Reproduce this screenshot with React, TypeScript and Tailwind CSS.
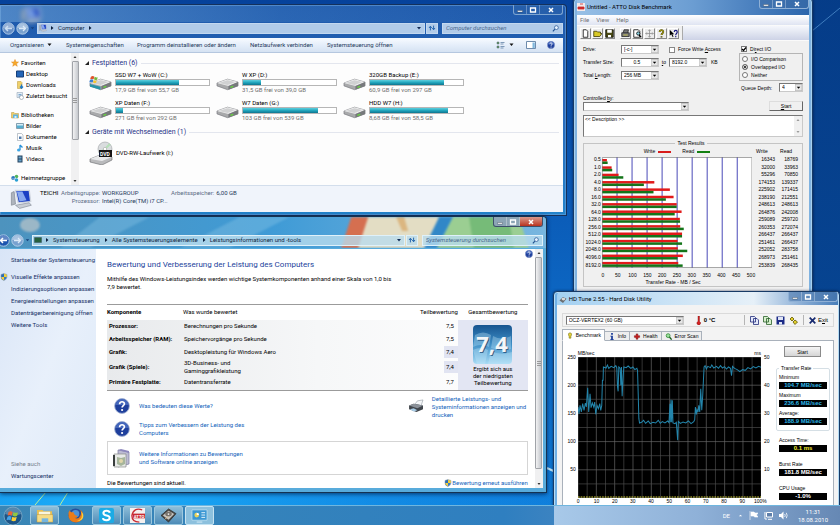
import type { ReactNode } from "react";

const NAV_GROUPS = [
  { title: "Favoriten", icon: "star", items: [["Desktop", "desktop"], ["Downloads", "downloads"], ["Zuletzt besucht", "recent"]] },
  { title: "Bibliotheken", icon: "library", items: [["Bilder", "pictures"], ["Dokumente", "document"], ["Musik", "music"], ["Videos", "video"]] },
  { title: "Heimnetzgruppe", icon: "homegroup", items: [] },
];

const DRIVES = [
  { name: "SSD W7 + WoW (C:)", free: "17,9 GB frei von 55,7 GB", used: 68, system: true },
  { name: "W XP (D:)", free: "31,5 GB frei von 39,0 GB", used: 19 },
  { name: "320GB Backup (E:)", free: "60,9 GB frei von 297 GB", used: 80 },
  { name: "XP Daten (F:)", free: "271 GB frei von 292 GB", used: 7 },
  { name: "W7 Daten (G:)", free: "103 GB frei von 539 GB", used: 81 },
  { name: "HDD W7 (H:)", free: "8,68 GB frei von 58,5 GB", used: 84 },
];

const SCORES = [
  { part: "Prozessor:", what: "Berechnungen pro Sekunde", score: "7,5" },
  { part: "Arbeitsspeicher (RAM):", what: "Speichervorgänge pro Sekunde", score: "7,5" },
  { part: "Grafik:", what: "Desktopleistung für Windows Aero", score: "7,4", low: true },
  { part: "Grafik (Spiele):", what: "3D-Business- und Gaminggrafikleistung", score: "7,4", low: true },
  { part: "Primäre Festplatte:", what: "Datentransferrate", score: "7,7" },
];

const ATTO: [string, number, number][] = [
  ["0.5", 16343, 18769],
  ["1.0", 32000, 33963],
  ["2.0", 55296, 70850],
  ["4.0", 174153, 139337],
  ["8.0", 225902, 171415],
  ["16.0", 238190, 212551],
  ["32.0", 248613, 248613],
  ["64.0", 264876, 242008],
  ["128.0", 259089, 259720],
  ["256.0", 260353, 272074],
  ["512.0", 266437, 266437],
  ["1024.0", 251461, 266437],
  ["2048.0", 252052, 283758],
  ["4096.0", 268973, 251461],
  ["8192.0", 253839, 268435],
];

const TRANSFER_LINE =
  "0,150 3,170 6,145 10,165 14,140 18,160 22,138 25,150 29,92 32,165 36,110 39,152 43,138 47,150 50,135 53,172 57,145 61,155 65,140 68,160 71,145 73,70 75,70 76,30 84,33 88,24 92,34 99,28 107,32 113,26 116,32 118,88 120,103 122,30 126,34 128,85 130,30 132,118 135,60 137,30 144,32 150,27 158,34 164,30 170,38 176,34 178,40 180,110 182,185 184,198 190,196 196,190 202,199 210,192 216,200 224,196 232,198 240,190 246,199 252,194 260,198 268,192 272,197 275,140 276,196 278,128 280,196 282,130 284,198 290,200 294,196 298,250 300,193 306,199 314,195 322,198 330,192 338,200 346,194 349,188 351,150 354,172 356,158 359,165 361,145 364,165 367,95 370,160 373,115 375,70 377,30 380,26 384,36 388,28 396,32 400,24 406,33 414,28 420,34 426,26 432,33 438,29 444,36 450,30 456,34 459,56 462,28 468,34 476,38 484,44 492,38 500,40 508,32 516,36 524,29 532,33 540,28 548,31";

export default function App() {
  return (
    <main
      className="relative h-screen min-h-[525px] w-full overflow-hidden bg-[#07489f] text-[6px] leading-[8px] text-black"
      style={{ fontFamily: 'Roboto, "Open Sans", sans-serif' }}
    >
      <Wallpaper />
      <ComputerWindow />
      <PerformanceWindow />
      <AttoWindow />
      <HdTuneWindow />
      <Taskbar />
    </main>
  );
}

function Wallpaper() {
  return (
    <svg className="absolute inset-0 h-full w-full" viewBox="0 0 840 525" preserveAspectRatio="none">
      <defs>
        <linearGradient id="sky" x1="0" y1="0" x2="0" y2="1">
          <stop offset="0" stopColor="#06429b" />
          <stop offset="0.4" stopColor="#0b5cb8" />
          <stop offset="1" stopColor="#0f7fdc" />
        </linearGradient>
        <linearGradient id="shade" x1="0" x2="1">
          <stop offset="0.68" stopColor="#053b84" stopOpacity="0" />
          <stop offset="0.9" stopColor="#053b84" stopOpacity="0.8" />
        </linearGradient>
        <radialGradient id="glow" cx="0.12" cy="0.98" r="0.6">
          <stop offset="0" stopColor="#1cb0fa" />
          <stop offset="1" stopColor="#1190ee" stopOpacity="0" />
        </radialGradient>
      </defs>
      <rect width="840" height="525" fill="url(#sky)" />
      <rect width="840" height="525" fill="url(#glow)" />
      <rect width="840" height="525" fill="url(#shade)" />
      <path d="M812 31 840 8" stroke="#4e8dcb" strokeWidth="0.8" />
      <path d="M547 468 560 474" stroke="#c8f0ff" strokeWidth="2" />
      <path d="M35 505 46 492M60 505 68 492" stroke="#b9f19a" strokeWidth="1" />
    </svg>
  );
}

function CaptionButtons({ red = false, dark = false }: { red?: boolean; dark?: boolean }) {
  return (
    <div
      className={`flex h-[10px] w-[50px] shrink-0 overflow-hidden rounded-b-[3px] border border-t-0 text-white ${
        dark ? "border-[#8fb0d5] bg-[#3d6ca3]/50" : red ? "border-[#3d4f6b] bg-[#8ca5b5]" : "border-[#7da4d0] bg-[#2c62aa]/60"
      }`}
    >
      <button aria-label="Minimieren" className="flex flex-1 items-center justify-center border-r border-white/30">
        <svg viewBox="0 0 8 8" className="h-2 w-2"><path d="M1.500 4.500h5v1.600h-5z" fill="#fff" stroke="#345" strokeWidth=".4" /></svg>
      </button>
      <button aria-label="Maximieren" className="flex flex-1 items-center justify-center border-r border-white/30">
        <svg viewBox="0 0 8 8" className="h-2 w-2"><path d="M1.500 2h5v4h-5z" fill="none" stroke="#fff" strokeWidth="1.300" /></svg>
      </button>
      <button
        aria-label="Schließen"
        className={`flex w-[22px] items-center justify-center ${red ? "bg-gradient-to-b from-[#d9978b] to-[#b8301c]" : ""}`}
      >
        <svg viewBox="0 0 8 8" className="h-2 w-2"><path d="m2 2 4 4M6 2 2 6" stroke="#fff" strokeWidth="1.500" /></svg>
      </button>
    </div>
  );
}

function AddressRow({ crumbs, search, bright = false }: { crumbs: string[]; search: string; bright?: boolean }) {
  const field = bright ? "border-[#dff1fa] bg-[#b9dcee]/80" : "border-[#c3d8f0] bg-[#b1cbe9]";
  return (
    <div className={`flex h-[12px] items-center gap-px ${bright ? "-ml-[3px]" : "pl-[2px]"}`}>
      <button aria-label="Zurück" className="h-[13px] w-[13px]">
        <svg viewBox="0 0 13 13">
          <circle cx="6.500" cy="6.500" r="5.700" fill={bright ? "#1c55ae" : "#668fc6"} stroke="#c5dcf2" strokeWidth=".8" />
          <path d="M1.500 6a5 4.500 0 0 1 10 0" fill="#fff" opacity=".3" />
          <path d="M10 6.500H3.500M6 4 3.500 6.500 6 9" fill="none" stroke={bright ? "#fff" : "#c9dcf1"} strokeWidth="1.500" />
        </svg>
      </button>
      <button aria-label="Vorwärts" className="h-[13px] w-[13px]">
        <svg viewBox="0 0 13 13">
          <circle cx="6.500" cy="6.500" r="5.700" fill="#78a1cf" stroke="#c5dcf2" strokeWidth=".8" />
          <path d="M1.500 6a5 4.500 0 0 1 10 0" fill="#fff" opacity=".35" />
          <path d="M3 6.500h6.500M7 4l2.500 2.500L7 9" fill="none" stroke="#dbe9f7" strokeWidth="1.300" />
        </svg>
      </button>
      <button aria-label="Verlauf" className="w-[6px]">
        <svg viewBox="0 0 6 6" className="h-[6px] w-[5px]"><path d="M1 2h4L3 4.500z" fill="#153f7c" /></svg>
      </button>
      <div className={`flex h-[11px] flex-1 items-center border ${field}`}>
        <span className="w-[10px] pl-px">{bright ? <Glyph name="panel" /> : <Glyph name="computer" />}</span>
        {crumbs.map((c) => (
          <span key={c} className="flex items-center text-[#10253f]">
            <Triangle />
            <a href="#" className="px-[2px]">{c}</a>
          </span>
        ))}
        {!bright && <Triangle />}
        <button aria-label="Adressliste" className="ml-auto px-[2px]">
          <svg viewBox="0 0 6 6" className="h-[6px] w-[6px]"><path d="M1 2h4L3 4.500z" fill="#102a55" /></svg>
        </button>
      </div>
      <button aria-label="Aktualisieren" className={`flex h-[11px] w-[12px] items-center justify-center border ${field}`}>
        <svg viewBox="0 0 10 10" className="h-[8px] w-[8px]">
          <path d="M3 8V3M1.300 5 3 2.800 4.700 5M7 2v5M5.300 5 7 7.200 8.700 5" fill="none" stroke="#2263ae" strokeWidth="1.200" />
        </svg>
      </button>
      <label className={`ml-[3px] flex h-[11px] w-[121px] items-center border px-[3px] ${field}`}>
        <input aria-label={search} placeholder={search} className="w-full min-w-0 bg-transparent italic placeholder-[#49678c] outline-none" />
        <svg viewBox="0 0 8 8" className="h-[7px] w-[7px] shrink-0">
          <path d="M1 7.300 3.300 4.700" stroke="#205090" strokeWidth="1.300" />
          <circle cx="5" cy="3" r="2.200" fill="#e7f3ff" stroke="#205090" strokeWidth=".8" />
        </svg>
      </label>
    </div>
  );
}

function Triangle() {
  return (
    <svg viewBox="0 0 6 6" className="mx-px h-[6px] w-[6px]"><path d="M2 1v4l2.500-2z" fill="#0b1f3d" /></svg>
  );
}

function HelpIcon({ className }: { className: string }) {
  return (
    <svg viewBox="0 0 16 16" className={className}>
      <circle cx="8" cy="8" r="7.400" fill="#1e3f9c" stroke="#a7b6d6" strokeWidth=".9" />
      <path d="M1.500 7a6.500 6 0 0 1 13 0z" fill="#5c80d0" opacity=".6" />
      <path d="M5.600 6.200c0-3.400 5-3 4.800-.2-.1 1.600-2.300 1.700-2.300 3.500" fill="none" stroke="#fff" strokeWidth="1.700" />
      <circle cx="8.100" cy="12" r="1.100" fill="#fff" />
    </svg>
  );
}

function ScrollBar({ thumb }: { thumb: string }) {
  return (
    <div className="flex w-[8px] shrink-0 flex-col items-center bg-[#f0f0f1]">
      <svg viewBox="0 0 8 8" className="h-2 w-2"><path d="M2.500 5h3L4 3z" fill="#333" /></svg>
      <div className={`flex w-[7px] items-center justify-center rounded-[1px] border border-[#a0a3a8] bg-gradient-to-r from-[#f2f2f3] to-[#c5c8cd] ${thumb}`}>
        <svg viewBox="0 0 4 5" className="h-[5px] w-[4px]"><path d="M0 .5h4M0 2.500h4M0 4.500h4" stroke="#888" strokeWidth=".8" /></svg>
      </div>
      <svg viewBox="0 0 8 8" className="mt-auto h-2 w-2"><path d="M2.500 3h3L4 5z" fill="#333" /></svg>
    </div>
  );
}

function ComputerWindow() {
  return (
    <section className="absolute top-[4px] left-0 w-[67.5%] rounded-tr-[4px] border border-l-0 border-[#14315c] bg-gradient-to-b from-[#1d58ab] via-[#2b6bbb] to-[#2283cb] pr-[3px] pb-[3px] ring-1 ring-[#6ba1dc]/60 ring-inset">
      <header className="flex h-[17px] justify-between bg-gradient-to-r from-[#7db1df]/50 via-[#5a95d0]/20 to-transparent">
        <span className="mt-[2px] ml-[20px] opacity-70 blur-[2px]"><Glyph name="computer" className="h-[17px] w-[22px]" /></span>
        <CaptionButtons />
      </header>
      <div className="pb-[4px]">
        <AddressRow crumbs={["Computer"]} search="Computer durchsuchen" />
      </div>
      <div className="flex h-[15px] items-center border-b border-[#b5c7df] bg-gradient-to-b from-[#f8fbff] via-[#e5eefa] to-[#d5e2f2] pr-[8px] pl-[10px] text-[#1e395b]">
        <button className="flex w-[56px] items-center gap-[3px]">Organisieren <Down /></button>
        <button className="w-[71px] text-left">Systemeigenschaften</button>
        <button className="w-[113px] text-left">Programm deinstallieren oder ändern</button>
        <button className="w-[77px] text-left">Netzlaufwerk verbinden</button>
        <button className="text-left">Systemsteuerung öffnen</button>
        <div className="ml-auto flex items-center gap-[11px]">
          <button aria-label="Ansicht ändern" className="mr-px flex items-center gap-[4px]">
            <svg viewBox="0 0 9 8" className="h-[8px] w-[9px]">
              <path d="M1 1h2v2H1zM1 5h2v2H1z" fill="#5f9a55" stroke="#586b80" strokeWidth=".5" />
              <path d="M4.500 1.500h4M4.500 3h3M4.500 5.500h4M4.500 7h3" stroke="#52749c" strokeWidth=".7" />
            </svg>
            <Down />
          </button>
          <button aria-label="Vorschaufenster">
            <svg viewBox="0 0 10 8" className="h-[8px] w-[10px]">
              <path d="M.5.5h9v7h-9z" fill="#fff" stroke="#5f7fa4" strokeWidth=".9" />
              <path d="M6.500 1.500h2.300V7H6.500z" fill="#7fb7dd" />
            </svg>
          </button>
          <button aria-label="Hilfe"><HelpIcon className="h-[8px] w-[8px]" /></button>
        </div>
      </div>
      <div className="flex h-[132px] bg-[#fdfdfd]">
        <nav className="w-[71px] shrink-0 overflow-hidden pt-[4px] pl-[11px] whitespace-nowrap">
          {NAV_GROUPS.map((g) => (
            <div key={g.title} className="pb-[8px]">
              <a href="#" className="flex h-[11px] items-center gap-[2px]">
                <Glyph name={g.icon} />{g.title}
              </a>
              {g.items.map(([label, icon]) => (
                <a key={label} href="#" className="flex h-[11px] items-center gap-[2px] pl-[5px]">
                  <Glyph name={icon} />{label}
                </a>
              ))}
            </div>
          ))}
        </nav>
        <ScrollBar thumb="h-[79px]" />
        <div className="flex-1 pt-[5px] pr-[4px] pl-[6px]">
          <GroupHeading>Festplatten (6)</GroupHeading>
          <div className="grid grid-cols-[127px_127px_127px] gap-y-[5px] pt-[3px] pl-[4px]">
            {DRIVES.map((d) => (
              <div key={d.name} className="flex h-[23px] items-center gap-[3px]">
                <DriveIcon system={d.system} />
                <div className="w-[95px]">
                  <div className="leading-[8px]">{d.name}</div>
                  <div className="h-[7px] border border-[#b6b6b6] bg-white">
                    <div className="h-full bg-gradient-to-b from-[#5bd0df] via-[#22a6bd] to-[#0d7590]" style={{ width: `${d.used}%` }} />
                  </div>
                  <div className="leading-[8px] text-[#6d6d6d]">{d.free}</div>
                </div>
              </div>
            ))}
          </div>
          <div className="pt-[5px]">
            <GroupHeading>Geräte mit Wechselmedien (1)</GroupHeading>
          </div>
          <div className="flex items-center gap-[3px] pt-[4px] pl-[4px]">
            <svg viewBox="0 0 24 24" className="h-[24px] w-[24px]">
              <circle cx="16" cy="8" r="7" fill="#d9dcde" stroke="#9c9fa2" strokeWidth=".6" />
              <path d="m16 8 5-5M16 8l-6 4" stroke="#b5dfb7" strokeWidth="2" />
              <circle cx="16" cy="8" r="1.700" fill="#fff" stroke="#999" strokeWidth=".5" />
              <path d="m1 18 10-4 12 2v3L13 24 1 21z" fill="#b9babc" stroke="#65676a" strokeWidth=".6" />
              <path d="m1 18 10-4 12 2-10 4z" fill="#e9eaeb" />
              <path d="M10 9h13v7H10z" fill="#151515" />
              <text x="11" y="14.600" fontSize="5" fontWeight="700" fill="#fff">DVD</text>
            </svg>
            <span>DVD-RW-Laufwerk (I:)</span>
          </div>
        </div>
      </div>
      <footer className="flex h-[27px] items-start gap-[8px] border-t border-[#d3deec] bg-[#f0f4fb] pt-[3px] pl-[10px] text-[#1e395b]">
        <Glyph name="computer" className="h-[20px] w-[22px]" />
        <div>
          <div className="flex gap-[2px]">
            <span className="w-[19px] text-black">TEICHI</span>
            <span className="w-[39px] text-right text-[#5a6b85]">Arbeitsgruppe:</span>
            <span className="w-[67px]">WORKGROUP</span>
            <span className="text-[#5a6b85]">Arbeitsspeicher:</span>
            <span>6,00 GB</span>
          </div>
          <div className="flex gap-[2px]">
            <span className="w-[60px] text-right text-[#5a6b85]">Prozessor:</span>
            <span>Intel(R) Core(TM) i7 CP...</span>
          </div>
        </div>
      </footer>
    </section>
  );
}

function GroupHeading({ children }: { children: ReactNode }) {
  return (
    <h2 className="flex h-[10px] items-center gap-[3px] text-[7px] text-[#1e3287]">
      <svg viewBox="0 0 4 4" className="h-[4px] w-[4px]"><path d="M4 0v4H0z" fill="#222" /></svg>
      {children}
      <span className="h-px flex-1 bg-[#e3e6ee]" />
    </h2>
  );
}

function Down() {
  return (
    <svg viewBox="0 0 5 4" className="h-[4px] w-[5px]"><path d="M.5.5h4L2.500 3z" fill="#111" /></svg>
  );
}

function DriveIcon({ system = false }: { system?: boolean }) {
  return (
    <svg viewBox="0 0 24 16" className="h-[16px] w-[23px] shrink-0">
      <path d="m1 8 11-4 11 3v4l-11 4-11-4z" fill="#a8a9ab" stroke="#707276" strokeWidth=".6" />
      <path d="m1 8 11-4 11 3-10 4z" fill="#ececed" />
      <path d="m3 8 9-3 8 2-8 3z" fill="#d0d1d2" />
      <path d="m13 11 10-4v4l-10 4z" fill="#77797c" />
      <path d="m15 12.500 3-1" stroke="#67d83e" strokeWidth="1.300" />
      {system && (
        <>
          <path d="m1 9 11 3v3L1 12z" fill="#2794a8" />
          <path d="M2 1.500q2-1.500 3.600 0l-.8 2.700q-2-1-3.600 0z" fill="#e0522b" />
          <path d="M6 1.500q2 1.500 3.200.3l-.8 2.700q-2 1-3.200-.3z" fill="#74b73d" />
          <path d="M1 4.800q2-1.300 3.600 0l-.8 2.700q-2-1.300-3.600 0z" fill="#3c7fd2" />
          <path d="M5 4.800q2 1.500 3.200.3l-.8 2.700q-2 1-3.200-.3z" fill="#f3c530" />
        </>
      )}
    </svg>
  );
}

function Glyph({ name, className = "h-[8px] w-[8px] shrink-0" }: { name: string; className?: string }) {
  return (
    <svg viewBox="0 0 16 16" className={className} preserveAspectRatio="none">
      {name === "star" && <path d="m8 1 2 5h5l-4 3.500 1.500 5L8 11.500l-4.500 3 1.500-5L1 6h5z" fill="#f7a928" stroke="#de861b" />}
      {name === "desktop" && <path d="M1 2h14v12H1z" fill="#2364b6" stroke="#173f78" strokeWidth="2" />}
      {name === "downloads" && (
        <>
          <path d="M3 1h7l2 2v12H3z" fill="#f0d16a" stroke="#b9932f" />
          <path d="M11 7v6M8 11l3 3.500 3-3.500" stroke="#1d79c8" strokeWidth="2.500" fill="none" />
        </>
      )}
      {name === "recent" && (
        <>
          <path d="M2 1h11v10H2z" fill="#e5edf5" stroke="#8296ab" />
          <path d="M5 5h6M5 8h6" stroke="#5690c4" strokeWidth="1.500" />
          <circle cx="11" cy="11" r="4" fill="#fff" stroke="#6f7f8f" />
        </>
      )}
      {name === "library" && (
        <>
          <path d="M1 3h5l2 2h7v9H1z" fill="#f0cc68" stroke="#b8963d" />
          <path d="M4 7h10v7H4z" fill="#62b3de" />
          <path d="M7 10h4v4H7z" fill="#d8f0fb" />
        </>
      )}
      {name === "pictures" && (
        <>
          <path d="M1 3h14v10H1z" fill="#55aed0" stroke="#5b6b7b" />
          <path d="M2 4h12v3H2z" fill="#d7edf6" />
        </>
      )}
      {name === "document" && (
        <>
          <path d="M3 1h8l3 3v11H3z" fill="#fff" stroke="#7e8c9b" />
          <path d="M6 7h5v5H6z" fill="#4e79ab" />
        </>
      )}
      {name === "music" && (
        <>
          <path d="M8 2v10M8 2l5 5" stroke="#258fd8" strokeWidth="2.500" />
          <ellipse cx="5.500" cy="12" rx="3.500" ry="3" fill="#3da6e5" />
        </>
      )}
      {name === "video" && (
        <>
          <path d="M3 1h10v14H3z" fill="#24425f" />
          <path d="M5 3h6v4H5zM5 9h6v4H5z" fill="#65a1c8" />
        </>
      )}
      {name === "homegroup" && (
        <>
          <circle cx="4.500" cy="8" r="4" fill="#2c77be" />
          <circle cx="11" cy="5" r="3.500" fill="#53b35d" />
          <circle cx="11" cy="12" r="3.500" fill="#2aa0d4" />
          <path d="M3 8l3 3 3-5" stroke="#fff" fill="none" />
        </>
      )}
      {name === "computer" && (
        <>
          <path d="M4 1h10l1 9-9 1z" fill="#1b3fc4" stroke="#d0d6df" />
          <path d="m5 2 4 0 3 7-5 1z" fill="#88a8ef" />
          <path d="M1 3l2-1 1 10-3 1z" fill="#aeb4bd" stroke="#7e8590" strokeWidth=".5" />
          <path d="m4 13 10-2 1.500 2L7 15.500z" fill="#c9ced6" stroke="#858d99" strokeWidth=".5" />
        </>
      )}
      {name === "panel" && <path d="M1 3h14v10H1z" fill="#25613d" stroke="#34505f" />}
      {name === "shield" && (
        <>
          <path d="M8 1 2 3v5q0 5 6 7z" fill="#2b6cb8" />
          <path d="m8 1 6 2v5H8z" fill="#f1cf3c" />
          <path d="M2 8h6v7Q3 13 2 8z" fill="#f1cf3c" />
          <path d="M8 8h6q-1 5-6 7z" fill="#3a7cc5" />
          <path d="M8 1 2 3v5q0 5 6 7 6-2 6-7V3z" fill="none" stroke="#8b9baa" />
        </>
      )}
    </svg>
  );
}

function PerformanceWindow() {
  return (
    <section className="absolute top-[216px] left-0 w-[65.1%] rounded-tr-[4px] border border-l-0 border-[#143252] bg-[#58abdb] pr-[3px] pb-[4px] shadow-[0_1px_4px_rgba(0,20,60,0.7)]">
      <div className="absolute inset-x-0 top-0 h-[31px] overflow-hidden rounded-tr-[4px] bg-gradient-to-r from-[#4d93be] via-[#3f9bd6] to-[#78b6df]">
        <svg viewBox="0 0 547 31" className="h-full w-full blur-[1px]" preserveAspectRatio="none">
          <ellipse cx="30" cy="8" rx="10" ry="7" fill="#bec6c9" opacity=".7" />
          <path d="M60 31 100 0h50L90 31zM180 31 240 0h50L230 31z" fill="#8fc9e8" opacity=".35" />
          <path d="M342 31 356 0h85l-14 31z" fill="#e3ddc4" />
          <path d="M342 31 352 0h17l-10 31z" fill="#d56f50" />
          <path d="m397 0 8 0 4 14-6 0z" fill="#dbb680" />
          <path d="m425 31 15-31h14l-16 31z" fill="#3187c7" />
          <path d="m438 31 16-31h66l10 31z" fill="#9bce92" />
          <path d="M470 0h40l5 31h-40z" fill="#57ac63" opacity=".55" />
        </svg>
      </div>
      <header className="relative flex h-[17px] justify-end"><CaptionButtons red /></header>
      <div className="relative pb-[3px]">
        <AddressRow bright crumbs={["Systemsteuerung", "Alle Systemsteuerungselemente", "Leistungsinformationen und -tools"]} search="Systemsteuerung durchsuchen" />
      </div>
      <div className="relative flex bg-white">
        <aside className="flex w-[96px] shrink-0 flex-col gap-[4px] overflow-hidden bg-gradient-to-br from-[#d9e5f7] via-[#e8f0fb] to-[#dde9f8] pt-[7px] pb-[8px] pl-[11px] whitespace-nowrap text-[#152f66]">
          <a href="#" className="mb-[5px]">Startseite der Systemsteuerung</a>
          <a href="#" className="-ml-[11px] flex items-center gap-[3px]"><Glyph name="shield" />Visuelle Effekte anpassen</a>
          <a href="#">Indizierungsoptionen anpassen</a>
          <a href="#">Energieeinstellungen anpassen</a>
          <a href="#">Datenträgerbereinigung öffnen</a>
          <a href="#">Weitere Tools</a>
          <span className="mt-auto text-[#77808c]">Siehe auch</span>
          <a href="#">Wartungscenter</a>
        </aside>
        <div className="relative flex-1 pr-[7px] pl-[11px]">
          <button aria-label="Hilfe" className="absolute top-[1px] right-[2px]"><HelpIcon className="h-[8px] w-[8px]" /></button>
          <h1 className="pt-[11px] text-[8px] leading-[10px] text-[#1b3f9b]">Bewertung und Verbesserung der Leistung des Computers</h1>
          <p className="w-[292px] pt-[5px]">Mithilfe des Windows-Leistungsindex werden wichtige Systemkomponenten anhand einer Skala von 1,0 bis 7,9 bewertet.</p>
          <table className="mt-[13px] w-full border-y border-[#9b9b9b]">
            <thead>
              <tr className="h-[15px] text-left">
                <th className="w-[76px]">Komponente</th>
                <th className="font-normal">Was wurde bewertet</th>
                <th className="w-[40px] text-right font-normal">Teilbewertung</th>
                <th className="w-[70px] text-center font-normal">Gesamtbewertung</th>
              </tr>
            </thead>
            <tbody className="bg-gradient-to-r from-[#e8eaec] via-[#f6f7f8] to-white">
              {SCORES.map((s, i) => (
                <tr key={s.part} className="h-[13px] last:h-[16px]">
                  <th className="pl-[2px] text-left">{s.part}</th>
                  <td className="pl-px"><div className={s.low && i === 3 ? "w-[64px]" : ""}>{s.what}</div></td>
                  <td className="text-right">
                    <span className={`ml-auto block w-[14px] py-[2px] pr-[4px] ${s.low ? "bg-[#e1e4f2]" : ""}`}>{s.score}</span>
                  </td>
                  {i === 0 && (
                    <td rowSpan={5} className="bg-[#e3e6f3] text-center align-top leading-[7px]">
                      <ScoreBadge />
                      <div className="mx-auto w-[44px] pt-px">Ergibt sich aus der niedrigsten Teilbewertung</div>
                    </td>
                  )}
                </tr>
              ))}
            </tbody>
          </table>
          <div className="flex justify-between text-[#1163bb]">
            <div className="flex flex-col gap-[7px] pt-[7px] pb-[4px] pl-[7px]">
              <a href="#" className="flex h-[16px] items-center gap-[9px]"><HelpIcon className="h-[16px] w-[16px]" />Was bedeuten diese Werte?</a>
              <a href="#" className="flex items-center gap-[9px]">
                <HelpIcon className="h-[16px] w-[16px]" />
                <span className="w-[108px]">Tipps zum Verbessern der Leistung des Computers</span>
              </a>
            </div>
            <a href="#" className="flex items-start gap-[7px] pt-[4px]">
              <svg viewBox="0 0 18 14" className="mt-[4px] h-[13px] w-[17px]">
                <path d="m7 6 3-4 6-1-2 6z" fill="#f4f6f8" stroke="#8c959e" strokeWidth=".6" />
                <path d="m1 7 5-2 10 2v4l-7 3-8-3z" fill="#41464c" />
                <path d="m1 7 5-2 10 2-6 3z" fill="#8b9199" />
                <path d="m2 11 4-1 4 2-4 1.500z" fill="#a7cbe5" />
              </svg>
              <span className="w-[96px]">Detaillierte Leistungs- und Systeminformationen anzeigen und drucken</span>
            </a>
          </div>
          <a href="#" className="flex h-[34px] items-center gap-[9px] border border-[#d5d5d5] pl-[5px] text-[#1163bb]">
            <svg viewBox="0 0 17 19" className="h-[19px] w-[17px]">
              <path d="m5 1 11 2v12l-11 3z" fill="#bcbbd3" stroke="#7d7c9d" strokeWidth=".7" />
              <path d="m5 1 3-1 8 2v2z" fill="#8d87bd" />
              <path d="M1 5h12v13H1z" fill="#e8eae8" stroke="#888b88" strokeWidth=".7" />
              <path d="M0 6h2v11H0z" fill="#393d3d" />
              <path d="m4 8 4 1 4-1v7l-4 2-4-2z" fill="#a6b59b" />
              <circle cx="8" cy="12" r="2" fill="#e2d6aa" />
            </svg>
            <span className="w-[108px]">Weitere Informationen zu Bewertungen und Software online anzeigen</span>
          </a>
          <div className="flex items-center justify-between pt-[4px] pb-px">
            <span>Die Bewertungen sind aktuell.</span>
            <a href="#" className="flex items-center text-[#1163bb]"><Glyph name="shield" />Bewertung erneut ausführen</a>
          </div>
        </div>
        <ScrollBar thumb="h-[212px]" />
      </div>
    </section>
  );
}

function ScoreBadge() {
  return (
    <svg viewBox="0 0 39 39" className="mx-auto mt-[5px] h-[39px] w-[39px]">
      <defs>
        <linearGradient id="badge" x1="0" y1="0" x2="0" y2="1">
          <stop offset="0" stopColor="#185590" />
          <stop offset=".5" stopColor="#3e8fc7" />
          <stop offset="1" stopColor="#a9dcf5" />
        </linearGradient>
      </defs>
      <rect width="39" height="39" rx="4" fill="url(#badge)" />
      <path d="M2 10q8-5 16 0l-2 12Q8 18 0 22zM20 11q9 5 18 0v13q-9 3-20-1zM0 25q8-4 15 0l-3 14H4zM18 26q9 5 21 1v12H15z" fill="#c5e7f8" opacity=".35" />
      <text x="20" y="28" textAnchor="middle" fontSize="22" fontWeight="700" fontFamily="Open Sans, sans-serif" fill="#17406e" opacity=".7">7,4</text>
      <text x="19" y="27" textAnchor="middle" fontSize="22" fontWeight="700" fontFamily="Open Sans, sans-serif" fill="#f4f6f8">7,4</text>
    </svg>
  );
}

function Select({ label, value, className, align = "" }: { label: string; value: string; className: string; align?: string }) {
  return (
    <span className={`relative inline-block h-[9px] shrink-0 ${className}`}>
      <select aria-label={label} className={`block h-[9px] w-full appearance-none border border-[#c9c9c9] border-t-[#777] border-l-[#777] bg-white py-0 pr-[8px] pl-[2px] leading-[7px] outline-none ${align}`}>
        <option>{value}</option>
      </select>
      <svg viewBox="0 0 8 7" className="pointer-events-none absolute top-px right-px h-[7px] w-[7px]">
        <path d="M0 0h8v7H0z" fill="#e6e6e6" stroke="#999" strokeWidth=".6" />
        <path d="M2 2.500h4L4 5z" fill="#000" />
      </svg>
    </span>
  );
}

function AttoWindow() {
  return (
    <section
      className="absolute -top-[2px] left-[68.2%] w-[28.6%] rounded-t-[4px] border border-[#173a66] bg-[#7fb2e0] px-[3px] pb-[6px] text-[6px] shadow-[0_0_3px_rgba(0,15,50,0.7)] ring-1 ring-[#a7d0ef] ring-inset"
      style={{ fontFamily: '"Liberation Sans", Arial, sans-serif' }}
    >
      <header className="flex h-[16px] items-start justify-between bg-gradient-to-r from-[#98c0e6] via-[#6b9dd2] to-[#2b65ac]">
        <h2 className="flex items-center gap-[2px] pt-[4px]" style={{ fontFamily: "Roboto, sans-serif" }}>
          <svg viewBox="0 0 8 8" className="h-[8px] w-[8px]">
            <path d="M0 0h8v8H0z" fill="#f4e9e9" />
            <path d="M1 4h6v2H1zM3 1h3" fill="#cc2b2b" stroke="#cc2b2b" strokeWidth=".8" />
          </svg>
          Untitled - ATTO Disk Benchmark
        </h2>
        <CaptionButtons dark />
      </header>
      <nav className="flex h-[10px] items-center gap-[7px] bg-gradient-to-b from-white to-[#dfe4f2] pl-[3px] text-[#6e7076]" style={{ fontFamily: "Roboto, sans-serif" }}>
        <button>File</button>
        <button>View</button>
        <button>Help</button>
      </nav>
      <div className="flex h-[16px] border-y border-[#fafafa] bg-gradient-to-b from-[#f5f7fc] to-[#cdd3e6]">
        <div className="flex items-center gap-px border-r border-[#aaa] bg-[#f0f0f0] pr-[3px] pl-[3px]">
          <ToolButton label="New"><path d="M3 1h4l2 2v8H3z" fill="#fff" stroke="#000" /></ToolButton>
          <ToolButton label="Open"><path d="M1 10V3h4l1 1h4v2h2l-3 4z" fill="#d8c927" stroke="#332f00" /></ToolButton>
          <ToolButton label="Save"><path d="M1 1h10v10H1z" fill="#4b4b14" stroke="#000" /><path d="M3 1h6v4H3zM4 8h4v3H4z" fill="#fff" /></ToolButton>
          <span className="w-[3px]" />
          <ToolButton label="Print"><path d="M1 5h10v5H1zM3 5l1-4h6L9 5" fill="#777" stroke="#222" /><path d="M3 8h6" stroke="#e0d94a" /></ToolButton>
          <ToolButton label="Preview"><path d="M1 1h6l2 2v8H1z" fill="#fff" stroke="#000" /><circle cx="7" cy="6" r="2.200" fill="#8ad2e2" stroke="#000" /><path d="m8 8 3 3" stroke="#000" strokeWidth="1.500" /></ToolButton>
          <ToolButton label="Move"><path d="M6 1v10M1 6h10M4.500 2.500 6 1l1.500 1.500M4.500 9.500 6 11l1.500-1.500M2.500 4.500 1 6l1.500 1.500M9.500 4.500 11 6 9.500 7.500" stroke="#8e8e8e" fill="none" /></ToolButton>
          <ToolButton label="About"><path d="M3.500 4c0-3.500 5-3 4.800 0C8.200 6 6 6 6 8M6 9.500v1.800" stroke="#443f00" strokeWidth="2.400" fill="none" /><path d="M3.500 4c0-3.500 5-3 4.800 0C8.200 6 6 6 6 8" stroke="#d8cf1a" fill="none" /></ToolButton>
          <ToolButton label="Context help"><path d="M1 1v8l2-2 2 4 1-1-1.500-3H7z" fill="#000" /><path d="M7 4c0-3 4-3 4 0 0 2-2 2-2 4M9 9v2" stroke="#15157c" strokeWidth="1.500" fill="none" /></ToolButton>
        </div>
      </div>
      <div className="bg-[#f0f0f0] px-[6px] pt-[4px] pb-[4px]">
        <div className="flex justify-between">
          <div className="grid grid-cols-[38px_38px_10px_38px_1fr] content-start items-center gap-y-[4px] text-[5px] leading-[9px]">
            <span>Drive:</span>
            <Select label="Drive" value="[-c-]" className="w-[38px]" />
            <span />
            <label className="col-span-2 flex items-center gap-[3px] whitespace-nowrap">
              <input type="checkbox" className="h-[6px] w-[6px] appearance-none border border-[#888] bg-white" />
              <span>Force Write <u>A</u>ccess</span>
            </label>
            <span>Transfer Size:</span>
            <Select label="Transfer Size from" value="0.5" className="w-[38px]" align="text-center" />
            <span className="text-center"><u>t</u>o</span>
            <Select label="Transfer Size to" value="8192.0" className="w-[38px]" />
            <span className="pl-[4px]">KB</span>
            <span>Total <u>L</u>ength:</span>
            <Select label="Total Length" value="256 MB" className="w-[38px]" />
          </div>
          <div className="w-[64px] shrink-0 text-[5px]">
            <label className="flex h-[7px] items-center gap-[3px] pl-[2px]">
              <span className="relative h-[6px] w-[6px]">
                <input type="checkbox" defaultChecked className="peer block h-[6px] w-[6px] appearance-none border border-[#777] bg-white" />
                <svg viewBox="0 0 6 6" className="pointer-events-none absolute inset-0"><path d="m1 3 1.500 1.500L5 1.500" stroke="#000" strokeWidth="1.200" fill="none" /></svg>
              </span>
              <span>Di<u>r</u>ect I/O</span>
            </label>
            <div className="mt-px mb-[2px] border border-[#b5b5b5] py-px pl-[2px]">
              {["I/O Comparison", "Overlapped I/O", "Neither"].map((r) => (
                <label key={r} className="flex h-[8px] items-center gap-[3px]">
                  <input type="radio" name="io" defaultChecked={r === "Overlapped I/O"} className="h-[6px] w-[6px] appearance-none rounded-full border border-[#777] bg-white checked:bg-black checked:shadow-[inset_0_0_0_1px_white]" />
                  {r}
                </label>
              ))}
            </div>
            <div className="flex items-center justify-between pl-[2px]">
              <span>Queue Depth:</span>
              <Select label="Queue Depth" value="4" className="w-[24px]" />
            </div>
          </div>
        </div>
        <div className="flex items-end justify-between pt-[2px]">
          <div className="text-[5px]">
            <div>Controlled <u>b</u>y:</div>
            <Select label="Controlled by" value="" className="w-[106px]" />
          </div>
          <button className="h-[10px] w-[34px] border border-t-[#ddd] border-r-[#666] border-b-[#666] border-l-[#ddd] bg-[#f0f0f0] text-[5px] leading-[8px]"><u>S</u>tart</button>
        </div>
        <div className="relative mt-[4px] h-[22px]">
          <textarea aria-label="Description" defaultValue="<< Description >>" className="block h-full w-full resize-none overflow-hidden border border-[#c9c9c9] border-t-[#777] border-l-[#777] bg-white px-px text-[5px] leading-[7px] outline-none" />
          <svg viewBox="0 0 8 20" className="absolute top-px right-px h-[20px] w-[8px]">
            <path d="M0 0h8v20H0z" fill="#f0f0f0" />
            <path d="M2.500 5h3L4 3zM2.500 15h3L4 17z" fill="#999" />
          </svg>
        </div>
        <fieldset className="mt-[2px] border border-[#c4c4c4] pr-[4px] pb-[1px]">
          <legend className="mx-auto px-[2px] text-[5px] leading-[8px]">Test Results</legend>
          <table className="h-[122px] w-full text-right leading-[7px]">
            <thead>
              <tr className="h-[9px] text-[5px]">
                <td className="w-[18px]" />
                <td>
                  <div className="flex items-center justify-center gap-[3px]">
                    Write <span className="mr-[8px] h-[2px] w-[13px] bg-[#d81c1c]" />
                    Read <span className="h-[2px] w-[13px] bg-[#128012]" />
                  </div>
                </td>
                <th className="w-[23px] text-left font-normal"><span className="pl-[4px]">Write</span></th>
                <th className="w-[23px] text-left font-normal"><span className="pl-[5px]">Read</span></th>
              </tr>
            </thead>
            <tbody>
              {ATTO.map(([size, write, read], i) => (
                <tr key={size}>
                  <th className="pr-px font-normal"><span className="text-[5px]">{size}</span></th>
                  {i === 0 && (
                    <td rowSpan={15} className="h-[111px] p-0"><AttoChart /></td>
                  )}
                  <td className="text-[5px]">{write}</td>
                  <td className="text-[5px]">{read}</td>
                </tr>
              ))}
            </tbody>
          </table>
          <div className="mr-[42px] ml-[14px] flex justify-between pt-[2px] text-[5px]">
            {[0, 50, 100, 150, 200, 250, 300, 350, 400, 450, 500].map((n) => (
              <span key={n} className="w-[10px] text-center">{n}</span>
            ))}
          </div>
          <div className="pr-[36px] text-center text-[5px] leading-[6px]">Transfer Rate - MB / Sec</div>
        </fieldset>
      </div>
    </section>
  );
}

function ToolButton({ label, children }: { label: string; children: ReactNode }) {
  return (
    <button aria-label={label} className="h-[11px] w-[11px] border border-t-white border-r-[#888] border-b-[#888] border-l-white bg-[#ececec]">
      <svg viewBox="0 0 12 12" className="h-full w-full">{children}</svg>
    </button>
  );
}

function AttoChart() {
  return (
    <svg viewBox="0 0 500 111" preserveAspectRatio="none" className="block h-[111px] w-full">
      <rect width="500" height="111" fill="#fff" />
      {[50, 100, 150, 200, 250, 300, 350, 400, 450].map((x) => (
        <path key={x} d={`M${x} 0v111`} stroke="#3636b0" strokeWidth="3" />
      ))}
      {ATTO.map(([size, write, read], i) => (
        <g key={size}>
          <rect y={2 + i * 7.35} width={write / 1000} height="2.500" fill="#e11a1a" />
          <rect y={4.500 + i * 7.35} width={read / 1000} height="2.500" fill="#14751a" />
        </g>
      ))}
      <path d="M1 .5h498v110H1z" fill="none" stroke="#777" strokeWidth="1" />
    </svg>
  );
}

function HdTuneWindow() {
  return (
    <section
      className="absolute top-[291px] right-0 left-[65.8%] rounded-t-[4px] border border-[#173a66] bg-[#6fb0e6] pr-px pl-[3px] text-[5px] shadow-[0_0_3px_rgba(0,15,50,0.7)] ring-1 ring-[#b4dbf5] ring-inset"
      style={{ fontFamily: '"Liberation Sans", Arial, sans-serif' }}
    >
      <header className="flex h-[13px] items-start justify-between rounded-t-[4px] bg-gradient-to-r from-[#a3d0f1] via-[#e6f0f8] via-70% to-[#477db9]">
        <h2 className="flex items-center gap-[2px] pt-[3px] pl-[2px] text-[6px] leading-[8px]" style={{ fontFamily: "Roboto, sans-serif" }}>
          <svg viewBox="0 0 8 8" className="h-[7px] w-[8px]"><path d="m0 5 4-4 4 2-4 5z" fill="#6b6d70" /><ellipse cx="4.500" cy="3.500" rx="2" ry="1.500" fill="#dadada" /></svg>
          HD Tune 2.55 - Hard Disk Utility
        </h2>
        <CaptionButtons dark />
      </header>
      <div className="bg-[#f3f3f3] px-[5px] pt-[8px] pr-[4px]">
        <div className="flex h-[14px] items-center border border-[#dadada] pr-[5px] pl-[3px]">
          <Select label="Laufwerk" value="OCZ-VERTEX2 (60 GB)" className="w-[118px]" />
          <svg viewBox="0 0 5 9" className="ml-[12px] h-[9px] w-[5px]"><path d="M2 0h1.500v5.500a1.800 1.800 0 1 1-1.500 0z" fill="#d52222" stroke="#7a1212" strokeWidth=".4" /></svg>
          <span className="pl-[3px] text-[6px] font-bold">0 °C</span>
          <div className="ml-auto flex items-center gap-[4px]">
            <Separator />
            {["Copy text", "Copy image"].map((l, i) => (
              <button key={l} aria-label={l}>
                <svg viewBox="0 0 9 9" className="h-[9px] w-[9px]">
                  <path d="M.5.5h4l1 1V6h-5zM3.500 2.500h3.500l1.500 1.500v4.500h-5z" fill={i ? "#d7efcd" : "#e4e9fb"} stroke={i ? "#29612a" : "#222c7a"} strokeWidth=".8" />
                </svg>
              </button>
            ))}
            <button aria-label="Save">
              <svg viewBox="0 0 9 9" className="h-[9px] w-[9px]"><path d="M.5.5h8v8h-8z" fill="#1b2a86" /><path d="M2 1h5v3H2zM3 6h3v2.500H3z" fill="#dfe5f5" /></svg>
            </button>
            <button aria-label="Options">
              <svg viewBox="0 0 9 9" className="h-[9px] w-[9px]"><path d="m1 3 2-2 2 2-2 2zM4 6l2-2 2.500 2L6 8.500z" fill="#e1cf2b" stroke="#615600" strokeWidth=".8" /></svg>
            </button>
            <Separator />
            <button className="flex items-center gap-[2px]">
              <svg viewBox="0 0 7 7" className="h-[7px] w-[7px]"><path d="m.7.7 5.600 5.600M6.300.7.7 6.300" stroke="#16296f" strokeWidth="1.700" /></svg>
              <span className="text-[6px]">E<u>x</u>it</span>
            </button>
          </div>
        </div>
        <div className="flex items-end pt-[2px]" role="tablist">
          <Tab active label="Benchmark"><path d="M3 5q-2-4 1-4t1 4v2H3z" fill="#e5d33b" stroke="#6a6100" strokeWidth=".6" /></Tab>
          <Tab label="Info"><path d="M3 0h2v2H3zM2 3h3v4h1v1H2V7h1V4H2z" fill="#1a3c9a" /></Tab>
          <Tab label="Health"><path d="M3 1h2v2h2v2H5v2H3V5H1V3h2z" fill="#c81d1d" stroke="#701010" strokeWidth=".5" /></Tab>
          <Tab label="Error Scan"><path d="m4 4 3 3.500" stroke="#165c1a" strokeWidth="1.500" /><circle cx="3" cy="3" r="2.200" fill="#9ce19d" stroke="#1e7b23" strokeWidth=".8" /></Tab>
        </div>
        <div className="-mt-px flex border border-[#a9b1bb] bg-white pt-[5px] pb-[22px]">
          <div className="grid flex-1 grid-cols-[15px_1fr_12px]">
            <div className="flex flex-col pt-[8px] pr-[2px] text-right leading-[7px]">
              {[250, 200, 150, 100, 50].map((n) => <div key={n} className="h-[28px]">{n}</div>)}
            </div>
            <div>
              <div className="flex h-[11px] items-end justify-between text-[5px] leading-[7px]"><span>MB/sec</span><span>ms</span></div>
              <TransferChart />
            </div>
            <div className="flex flex-col pt-[8px] pl-[3px] leading-[7px]">
              {[50, 40, 30, 20, 10].map((n) => <div key={n} className="h-[28px]">{n}</div>)}
            </div>
            <div className="col-span-3 mr-[5px] ml-[8px] flex justify-between leading-[7px]">
              {["0", "10", "20", "30", "40", "50", "60", "70", "80", "90", "100%"].map((n) => (
                <span key={n} className="w-[15px] text-center">{n}</span>
              ))}
            </div>
          </div>
          <div className="w-[60px] shrink-0 pr-[3px] pl-[3px]">
            <div className="pl-[8px]">
              <button className="h-[11px] w-[37px] border border-[#8a8a8a] bg-gradient-to-b from-[#f5f5f5] to-[#d5d5d5] leading-[8px]">Start</button>
            </div>
            <fieldset className="mt-[8px] rounded-[2px] border border-[#d5dfe5] px-[2px] pb-[4px]">
              <legend className="px-[2px] leading-[7px]">Transfer Rate</legend>
              <Reading label="Minimum" value="104.7 MB/sec" color="text-[#2bb5e6]" />
              <Reading label="Maximum" value="236.6 MB/sec" color="text-[#2bb5e6]" />
              <Reading label="Average:" value="188.9 MB/sec" color="text-[#2bb5e6]" />
            </fieldset>
            <div className="flex flex-col gap-[6px] px-[3px] pt-[4px]">
              <Reading label="Access Time:" value="0.1 ms" color="text-[#f0ec30]" />
              <Reading label="Burst Rate" value="181.8 MB/sec" color="text-white" />
              <Reading label="CPU Usage" value="-1.0%" color="text-white" />
            </div>
          </div>
        </div>
      </div>
    </section>
  );
}

function Separator() {
  return <span className="mx-px h-[10px] w-px bg-[#b5b5b5]" />;
}

function Tab({ label, active = false, children }: { label: string; active?: boolean; children: ReactNode }) {
  return (
    <button
      role="tab"
      aria-selected={active}
      className={`flex items-center gap-[2px] border border-[#a9b1bb] px-[3px] ${active ? "relative h-[12px] w-[43px] border-b-white bg-white" : "h-[10px] border-l-0 bg-[#eeeeee]"}`}
    >
      <svg viewBox="0 0 8 8" className="h-[7px] w-[8px] shrink-0">{children}</svg>
      <span className="whitespace-nowrap">{label}</span>
    </button>
  );
}

function Reading({ label, value, color }: { label: string; value: string; color: string }) {
  return (
    <div className="pb-px">
      <div className="leading-[10px]">{label}</div>
      <output className={`block h-[7px] bg-black text-center text-[6px] leading-[7px] font-bold whitespace-nowrap ${color}`}>{value}</output>
    </div>
  );
}

function TransferChart() {
  return (
    <svg viewBox="0 0 548 423" preserveAspectRatio="none" className="block h-[141px] w-full">
      <rect width="548" height="423" fill="#000" />
      {Array.from({ length: 21 }, (_, i) => (
        <path key={i} d={`M${i * 27.4} 0v423`} stroke={i % 2 ? "#4d4d4d" : "#6b6b6b"} strokeWidth="2" />
      ))}
      {Array.from({ length: 11 }, (_, i) => (
        <path key={i} d={`M0 ${i * 42.3}h548`} stroke={i % 2 ? "#4d4d4d" : "#6b6b6b"} strokeWidth="2" />
      ))}
      <polyline points={TRANSFER_LINE} fill="none" stroke="#2385ab" strokeWidth="3" />
      <path d="M0 420h548" stroke="#d6d13a" strokeWidth="3" strokeDasharray="5 3" />
    </svg>
  );
}

function Taskbar() {
  return (
    <footer className="absolute inset-x-0 bottom-0 flex h-[20px] items-center border-t border-[#6fb6df] bg-gradient-to-r from-[#3a86b5] via-[#2f7fc0] via-60% to-[#7299c5]">
      <div className="absolute inset-y-0 right-0 left-[66%] bg-gradient-to-r from-[#a8c9e9] via-[#8fb1d8] to-[#6688b4]" />
      <button aria-label="Start" className="relative ml-[3px] h-[20px] w-[20px]">
        <svg viewBox="0 0 20 20">
          <circle cx="10" cy="10" r="9" fill="#1c5486" stroke="#8bb5cf" strokeWidth=".7" />
          <path d="M2 8a8 7 0 0 1 16 0q-8 3-16 0" fill="#8fb9d3" opacity=".5" />
          <path d="M5.500 6q2-1.500 4.200 0l-1 3.700q-2-1.200-4 0z" fill="#ee6535" />
          <path d="M10.500 6q2 1.500 4.500.4l-1 3.700q-2.300 1-4.300-.3z" fill="#92c83f" />
          <path d="M4.500 10.700q2-1.200 4 0l-1 3.600q-2-1.200-4 0z" fill="#45a2e8" />
          <path d="M9.300 10.800q2 1.300 4.400.3l-1 3.600q-2.400 1-4.400-.3z" fill="#fbcf38" />
        </svg>
      </button>
      <div className="relative ml-[7px] flex gap-[2px]">
        <TaskButton label="Explorer">
          <path d="M1 2h6l1 1.500h9V14H1z" fill="#e6bf53" />
          <path d="M3 4h12v5H3z" fill="#f9f5df" />
          <path d="M1 7h17v8H1z" fill="#f6dc86" stroke="#b69134" strokeWidth=".5" />
          <path d="M6 11h7v4H6z" fill="#74b5e0" />
        </TaskButton>
        <TaskButton label="Firefox" plain>
          <circle cx="9" cy="8" r="7.500" fill="#254f9d" />
          <circle cx="9" cy="6" r="4" fill="#4d91d5" />
          <path d="M1.500 5q-1 10 8 10.500 8-.5 7.500-9-1-4-3-4 2 3 0 6-2 4-6 2 3 0 3-2-4-1-4-4Q3 5 3 2z" fill="#ea7b18" />
          <path d="M15 4q3 8-5 10 9 0 7-8z" fill="#f8cf3d" />
        </TaskButton>
        <TaskButton label="Skype">
          <rect x="1" width="16" height="16" rx="2" fill="#1cabe5" />
          <path d="M12.500 5Q12 3 9 3T5.700 5.300Q5.700 7.300 9 8t3.500 2.500Q12.500 13 9 13t-3.800-2.300" fill="none" stroke="#fff" strokeWidth="2.200" />
        </TaskButton>
        <TaskButton label="ATTO Disk Benchmark">
          <path d="M1 0h16v16H1z" fill="#f4f0ef" />
          <path d="M14 2Q5-1 3 8q0 7 8 7" fill="none" stroke="#c92a32" strokeWidth="1.400" />
          <path d="M4 6h13v5H4z" fill="#c92a32" />
          <text x="5" y="10.300" fontSize="4.500" fontWeight="700" fill="#fff">ATTO</text>
        </TaskButton>
        <TaskButton label="HD Tune">
          <path d="m1 8 8-7 8 5-8 9z" fill="#4d4b48" stroke="#24221f" strokeWidth=".7" />
          <path d="m3 8 6-5 6 3.500-6 6z" fill="#c9c6c1" />
          <ellipse cx="9" cy="6.500" rx="3.500" ry="2.500" fill="#77716a" />
          <circle cx="9" cy="6.500" r="1" fill="#eee" />
          <path d="m5 12 4-3" stroke="#d4bb8e" />
        </TaskButton>
        <TaskButton label="Leistungsinformationen" active>
          <path d="M1 2h16v11H1z" fill="#3b97d3" stroke="#cde8f6" strokeWidth=".7" />
          <circle cx="6" cy="7.500" r="2.500" fill="#e8d258" />
          <path d="M6 7.500V5a2.500 2.500 0 0 1 2.500 2.500z" fill="#fff" />
          <path d="M11 5h4M11 7.500h4M11 10h4" stroke="#e9f6fd" />
          <path d="M6 15h6" stroke="#d9edf7" />
        </TaskButton>
      </div>
      <div className="relative ml-auto flex items-center gap-[6px] pr-[11px] text-white">
        <span className="pr-[2px]">DE</span>
        <svg viewBox="0 0 6 6" className="h-[5px] w-[5px]"><path d="M1 4h4L3 2z" fill="#fff" /></svg>
        <svg viewBox="0 0 9 9" className="h-[9px] w-[9px]"><path d="M1 0v9M2 1h3l1 1h3L7.500 4 9 6H5.500L5 5H2z" fill="#fff" stroke="#fff" strokeWidth=".6" /></svg>
        <svg viewBox="0 0 9 9" className="h-[9px] w-[9px]"><path d="M2.500 1.500h6v4.500h-6zM4 8.300h4M1 1v7h2" fill="#5f80ab" stroke="#fff" /></svg>
        <svg viewBox="0 0 9 9" className="mr-[3px] h-[9px] w-[9px]"><path d="M0 3h2l2.500-2.500v8L2 6H0z" fill="#fff" /><path d="M5.700 3q1 1.500 0 3M7.300 1.800q1.700 2.700 0 5.400" stroke="#fff" fill="none" strokeWidth=".8" /></svg>
        <time className="w-[32px] text-center leading-[8px]">11:31<br />18.08.2010</time>
      </div>
    </footer>
  );
}

function TaskButton({ label, plain = false, active = false, children }: { label: string; plain?: boolean; active?: boolean; children: ReactNode }) {
  return (
    <button
      aria-label={label}
      className={`flex h-[19px] w-[29px] items-center justify-center rounded-[2px] ${
        plain ? "" : active ? "border border-[#c6e3f2] bg-[#a3cfe6]/80" : "border border-[#9bc8df] bg-gradient-to-b from-[#8dbdd8] to-[#4c8bb7]"
      }`}
    >
      <svg viewBox="0 0 18 16" className="h-[15px] w-[17px]">{children}</svg>
    </button>
  );
}
